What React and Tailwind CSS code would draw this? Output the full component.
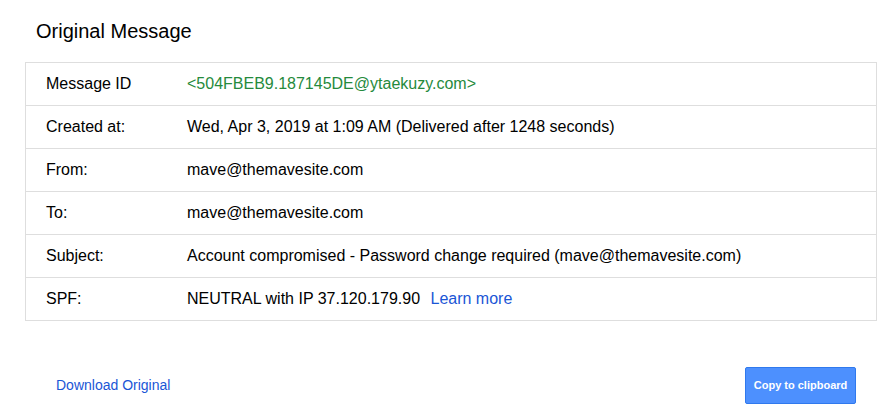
export default function App() {
  const rows = [
    { label: "Message ID", value: <span className="text-[#258a3c]">&lt;504FBEB9.187145DE@ytaekuzy.com&gt;</span> },
    { label: "Created at:", value: "Wed, Apr 3, 2019 at 1:09 AM (Delivered after 1248 seconds)" },
    { label: "From:", value: "mave@themavesite.com" },
    { label: "To:", value: "mave@themavesite.com" },
    { label: "Subject:", value: "Account compromised - Password change required (mave@themavesite.com)" },
    {
      label: "SPF:",
      value: (
        <>
          NEUTRAL with IP 37.120.179.90{" "}
          <a href="#" className="ml-[6px] text-[#1a56d6]">Learn more</a>
        </>
      ),
    },
  ];

  return (
    <div className="w-[892px] h-[420px] bg-white font-['Liberation_Sans',Arial,sans-serif] text-[#222]">
      <h1 className="pl-9 pt-[19px] text-[20px] leading-[24px] text-black">Original Message</h1>
      <div className="mx-[25px] mt-[19px] w-[852px] border border-[#dedede]">
        {rows.map((r, i) => (
          <div
            key={r.label}
            className={`flex items-center text-[16px] text-black ${i > 0 ? "h-[43px] border-t border-[#dedede]" : "h-[42px]"}`}
          >
            <div className="w-[161px] pl-5">{r.label}</div>
            <div>{r.value}</div>
          </div>
        ))}
      </div>
      <div className="mt-[46px] flex items-center justify-between pl-14 pr-[36px]">
        <a href="#" className="text-[14px] text-[#1a56d6]">Download Original</a>
        <button className="h-[37px] w-[111px] rounded-[2px] border border-[#3079ed] bg-[#4d90fe] text-[11px] font-bold text-white">
          Copy to clipboard
        </button>
      </div>
    </div>
  );
}
